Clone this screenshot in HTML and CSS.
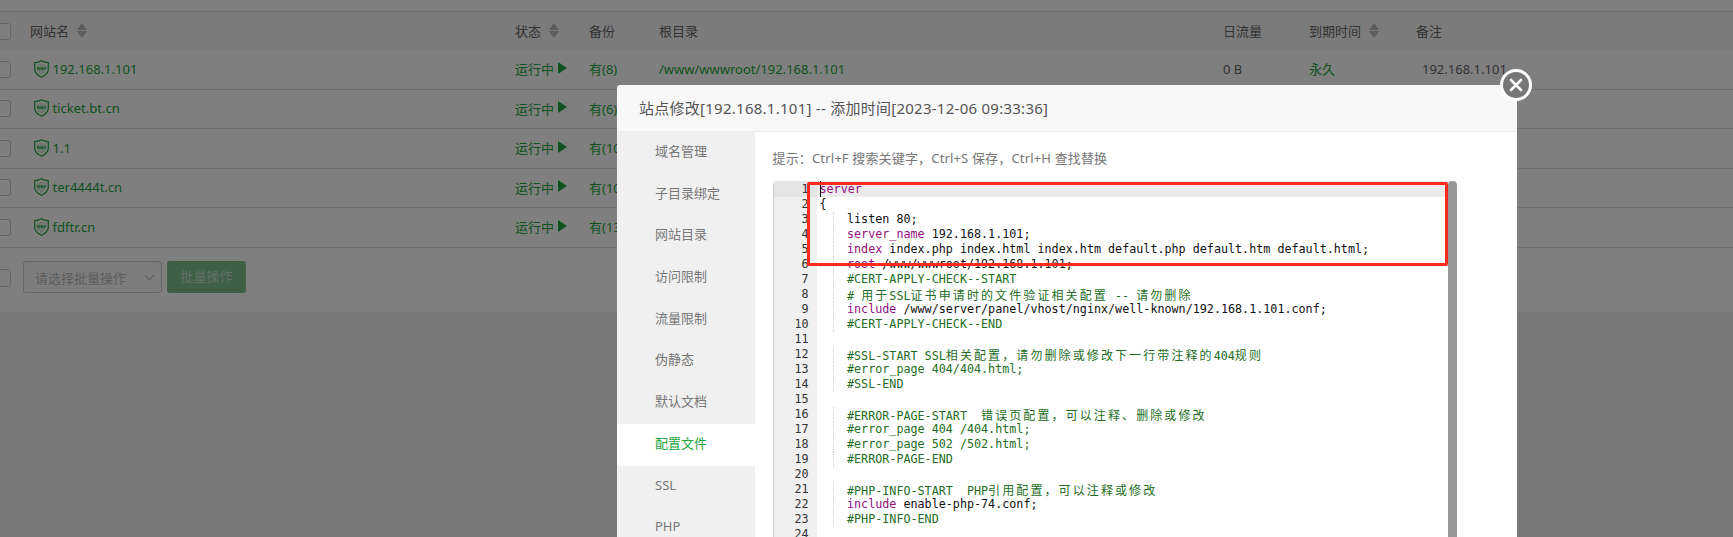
FILE: index.html
```html
<!DOCTYPE html>
<html lang="zh-CN">
<head>
<meta charset="utf-8">
<title>站点修改</title>
<link rel="stylesheet" href="styles.css">
</head>
<body>
<main class="page">
  <section class="panel">
    <div class="row head">
      <div class="cell-check"><span class="check"></span></div>
      <div class="cell">网站名<span class="sort"></span></div>
      <div class="cell">状态<span class="sort"></span></div>
      <div class="cell">备份</div>
      <div class="cell">根目录</div>
      <div class="cell">日流量</div>
      <div class="cell">到期时间<span class="sort"></span></div>
      <div class="cell">备注</div>
    </div>
    <div class="row">
      <div class="cell-check"><span class="check"></span></div>
      <div class="cell link"><svg class="shield" viewBox="0 0 15 18"><path class="sh-out" d="M7.5 .7 C9.6 2 11.9 2.6 14.3 2.7 V9.6 C14.3 13 11.2 15.5 7.5 17.2 C3.8 15.5 .7 13 .7 9.6 V2.7 C3.1 2.6 5.4 2 7.5 .7 Z"/><path class="sh-in" d="M7.5 3.4 C9 4.2 10.6 4.7 12.2 4.8 V9.4 C12.2 11.8 10.1 13.5 7.5 14.8 C4.9 13.5 2.8 11.8 2.8 9.4 V4.8 C4.4 4.7 6 4.2 7.5 3.4 Z"/><text x="7.5" y="10.4" text-anchor="middle" class="waf-text">WAF</text></svg>192.168.1.101</div>
      <div class="cell link">运行中<span class="play"></span></div>
      <div class="cell link">有(8)</div>
      <div class="cell link">/www/wwwroot/192.168.1.101</div>
      <div class="cell">0 B</div>
      <div class="cell link">永久</div>
      <div class="cell note">192.168.1.101</div>
    </div>
    <div class="row">
      <div class="cell-check"><span class="check"></span></div>
      <div class="cell link"><svg class="shield" viewBox="0 0 15 18"><path class="sh-out" d="M7.5 .7 C9.6 2 11.9 2.6 14.3 2.7 V9.6 C14.3 13 11.2 15.5 7.5 17.2 C3.8 15.5 .7 13 .7 9.6 V2.7 C3.1 2.6 5.4 2 7.5 .7 Z"/><path class="sh-in" d="M7.5 3.4 C9 4.2 10.6 4.7 12.2 4.8 V9.4 C12.2 11.8 10.1 13.5 7.5 14.8 C4.9 13.5 2.8 11.8 2.8 9.4 V4.8 C4.4 4.7 6 4.2 7.5 3.4 Z"/><text x="7.5" y="10.4" text-anchor="middle" class="waf-text">WAF</text></svg>ticket.bt.cn</div>
      <div class="cell link">运行中<span class="play"></span></div>
      <div class="cell link">有(6)</div>
      <div class="cell"></div><div class="cell"></div><div class="cell"></div><div class="cell"></div>
    </div>
    <div class="row">
      <div class="cell-check"><span class="check"></span></div>
      <div class="cell link"><svg class="shield" viewBox="0 0 15 18"><path class="sh-out" d="M7.5 .7 C9.6 2 11.9 2.6 14.3 2.7 V9.6 C14.3 13 11.2 15.5 7.5 17.2 C3.8 15.5 .7 13 .7 9.6 V2.7 C3.1 2.6 5.4 2 7.5 .7 Z"/><path class="sh-in" d="M7.5 3.4 C9 4.2 10.6 4.7 12.2 4.8 V9.4 C12.2 11.8 10.1 13.5 7.5 14.8 C4.9 13.5 2.8 11.8 2.8 9.4 V4.8 C4.4 4.7 6 4.2 7.5 3.4 Z"/><text x="7.5" y="10.4" text-anchor="middle" class="waf-text">WAF</text></svg>1.1</div>
      <div class="cell link">运行中<span class="play"></span></div>
      <div class="cell link">有(10)</div>
      <div class="cell"></div><div class="cell"></div><div class="cell"></div><div class="cell"></div>
    </div>
    <div class="row">
      <div class="cell-check"><span class="check"></span></div>
      <div class="cell link"><svg class="shield" viewBox="0 0 15 18"><path class="sh-out" d="M7.5 .7 C9.6 2 11.9 2.6 14.3 2.7 V9.6 C14.3 13 11.2 15.5 7.5 17.2 C3.8 15.5 .7 13 .7 9.6 V2.7 C3.1 2.6 5.4 2 7.5 .7 Z"/><path class="sh-in" d="M7.5 3.4 C9 4.2 10.6 4.7 12.2 4.8 V9.4 C12.2 11.8 10.1 13.5 7.5 14.8 C4.9 13.5 2.8 11.8 2.8 9.4 V4.8 C4.4 4.7 6 4.2 7.5 3.4 Z"/><text x="7.5" y="10.4" text-anchor="middle" class="waf-text">WAF</text></svg>ter4444t.cn</div>
      <div class="cell link">运行中<span class="play"></span></div>
      <div class="cell link">有(10)</div>
      <div class="cell"></div><div class="cell"></div><div class="cell"></div><div class="cell"></div>
    </div>
    <div class="row">
      <div class="cell-check"><span class="check"></span></div>
      <div class="cell link"><svg class="shield" viewBox="0 0 15 18"><path class="sh-out" d="M7.5 .7 C9.6 2 11.9 2.6 14.3 2.7 V9.6 C14.3 13 11.2 15.5 7.5 17.2 C3.8 15.5 .7 13 .7 9.6 V2.7 C3.1 2.6 5.4 2 7.5 .7 Z"/><path class="sh-in" d="M7.5 3.4 C9 4.2 10.6 4.7 12.2 4.8 V9.4 C12.2 11.8 10.1 13.5 7.5 14.8 C4.9 13.5 2.8 11.8 2.8 9.4 V4.8 C4.4 4.7 6 4.2 7.5 3.4 Z"/><text x="7.5" y="10.4" text-anchor="middle" class="waf-text">WAF</text></svg>fdftr.cn</div>
      <div class="cell link">运行中<span class="play"></span></div>
      <div class="cell link">有(13)</div>
      <div class="cell"></div><div class="cell"></div><div class="cell"></div><div class="cell"></div>
    </div>
    <div class="batch">
      <span class="check"></span>
      <div class="select">请选择批量操作<svg class="chev" viewBox="0 0 12 7"><path d="M1 1 L6 6 L11 1" fill="none" stroke="#999" stroke-width="1"/></svg></div>
      <div class="btn">批量操作</div>
    </div>
  </section>
</main>
<div class="shade"></div>
<div class="modal">
  <header class="modal-title">站点修改[192.168.1.101] -- 添加时间[2023-12-06 09:33:36]</header>
  <div class="modal-body">
    <nav class="side">
      <div class="side-item">域名管理</div>
      <div class="side-item">子目录绑定</div>
      <div class="side-item">网站目录</div>
      <div class="side-item">访问限制</div>
      <div class="side-item">流量限制</div>
      <div class="side-item">伪静态</div>
      <div class="side-item">默认文档</div>
      <div class="side-item active">配置文件</div>
      <div class="side-item">SSL</div>
      <div class="side-item">PHP</div>
    </nav>
    <div class="content">
      <p class="hint">提示：Ctrl+F 搜索关键字，Ctrl+S 保存，Ctrl+H 查找替换</p>
      <div class="editor">
        <div class="gutter">
          <div class="num on">1</div><div class="num">2</div><div class="num">3</div><div class="num">4</div><div class="num">5</div><div class="num">6</div><div class="num">7</div><div class="num">8</div><div class="num">9</div><div class="num">10</div><div class="num">11</div><div class="num">12</div><div class="num">13</div><div class="num">14</div><div class="num">15</div><div class="num">16</div><div class="num">17</div><div class="num">18</div><div class="num">19</div><div class="num">20</div><div class="num">21</div><div class="num">22</div><div class="num">23</div><div class="num">24</div>
        </div>
        <div class="code">
          <div class="line on"><span class="caret"></span><span class="kw">server</span></div>
          <div class="line">{</div>
          <div class="line in"><span>listen 80;</span></div>
          <div class="line in"><span><span class="kw">server_name</span> 192.168.1.101;</span></div>
          <div class="line in"><span><span class="kw">index</span> index.php index.html index.htm default.php default.htm default.html;</span></div>
          <div class="line in"><span><span class="kw">root</span> /www/wwwroot/192.168.1.101;</span></div>
          <div class="line in"><span class="cm">#CERT-APPLY-CHECK--START</span></div>
          <div class="line in"><span class="cm"># <span class="cjk">用于</span>SSL<span class="cjk">证书申请时的文件验证相关配置</span> -- <span class="cjk">请勿删除</span></span></div>
          <div class="line in"><span><span class="kw">include</span> /www/server/panel/vhost/nginx/well-known/192.168.1.101.conf;</span></div>
          <div class="line in"><span class="cm">#CERT-APPLY-CHECK--END</span></div>
          <div class="line"></div>
          <div class="line in"><span class="cm">#SSL-START SSL<span class="cjk">相关配置，请勿删除或修改下一行带注释的</span>404<span class="cjk">规则</span></span></div>
          <div class="line in"><span class="cm">#error_page 404/404.html;</span></div>
          <div class="line in"><span class="cm">#SSL-END</span></div>
          <div class="line"></div>
          <div class="line in"><span class="cm">#ERROR-PAGE-START&nbsp; <span class="cjk">错误页配置，可以注释、删除或修改</span></span></div>
          <div class="line in"><span class="cm">#error_page 404 /404.html;</span></div>
          <div class="line in"><span class="cm">#error_page 502 /502.html;</span></div>
          <div class="line in"><span class="cm">#ERROR-PAGE-END</span></div>
          <div class="line"></div>
          <div class="line in"><span class="cm">#PHP-INFO-START&nbsp; PHP<span class="cjk">引用配置，可以注释或修改</span></span></div>
          <div class="line in"><span><span class="kw">include</span> enable-php-74.conf;</span></div>
          <div class="line in"><span class="cm">#PHP-INFO-END</span></div>
          <div class="line"></div>
        </div>
        <div class="scrollbar"></div>
        <div class="redbox"></div>
      </div>
    </div>
  </div>
  <div class="close"><svg viewBox="0 0 26 26"><path d="M8 8 L18 18 M18 8 L8 18" stroke="#fff" stroke-width="2.6" stroke-linecap="round"/></svg></div>
</div>
</body>
</html>
```
FILE: styles.css
```css
* { box-sizing: border-box; }
html, body { margin: 0; height: 537px; overflow: hidden; }
body {
  font-family: "Noto Sans", "Noto Sans CJK SC", sans-serif;
  font-size: 13px;
  color: #666;
  background: #f0f0f0;
}
.waf-text { font: 700 4.4px "Liberation Sans", sans-serif; fill: #20a53a; }
.sh-out { fill: none; stroke: #20a53a; stroke-width: 1.2; }
.sh-in { fill: #20a53a; fill-opacity: .18; }
.page { height: 537px; }
.panel { background: #fff; height: 312px; padding-top: 11px; }
.row {
  display: grid;
  grid-template-columns: 30px 485px 74px 70px 564px 86px 107px 1fr;
  height: 39.5px;
  border-bottom: 1px solid #ddd;
  align-items: center;
}
.head { height: 39px; background: #f6f6f6; border-top: 1px solid #ddd; border-bottom: 0; }
.cell { display: flex; align-items: center; white-space: nowrap; padding-bottom: 1.5px; }
.link { color: #20a53a; }
.note { padding-left: 6px; }
.cell-check { display: flex; align-items: center; }
.check {
  display: block;
  width: 17px;
  height: 17px;
  margin-left: -6px;
  border: 1px solid #ccc;
  border-radius: 3px;
  background: #fff;
}
.shield { width: 15px; height: 18px; margin: 0 4px 0 3.5px; flex: none; }
.sort {
  position: relative;
  display: inline-block;
  width: 10px;
  height: 15px;
  margin-left: 8px;
}
.sort::before, .sort::after {
  content: "";
  position: absolute;
  left: 0;
  border-left: 5px solid transparent;
  border-right: 5px solid transparent;
}
.sort::before { top: 0; border-bottom: 7px solid #bbb; }
.sort::after { bottom: 0; border-top: 7px solid #bbb; }
.play {
  display: inline-block;
  margin: -2px 0 0 4px;
  border-left: 9px solid #20a53a;
  border-top: 6.5px solid transparent;
  border-bottom: 6.5px solid transparent;
}
.batch {
  display: flex;
  align-items: center;
  gap: 5px;
  padding-top: 13.5px;
}
.batch .check { margin-right: 7px; height: 18px; margin-top: 1px; }
.select {
  position: relative;
  width: 139px;
  height: 32px;
  line-height: 32px;
  padding-left: 11px;
  border: 1px solid #ccc;
  border-radius: 3px;
  color: #bbb;
  background: #fafafa;
}
.chev { position: absolute; left: 120px; top: 12px; width: 11px; height: 7px; }
.btn {
  width: 79px;
  height: 32px;
  line-height: 31px;
  text-align: center;
  background: #7fbf8d;
  border-radius: 3px;
  font-size: 13px;
  color: #c4dfca;
}
.shade { position: absolute; inset: 0; background: rgba(0, 0, 0, .5); }
.modal {
  position: absolute;
  left: 617px;
  top: 85px;
  width: 900px;
  height: 460px;
  background: #fff;
  border-radius: 4px 4px 0 0;
}
.modal-title {
  height: 47px;
  line-height: 46px;
  padding-left: 22px;
  font-size: 15px;
  letter-spacing: .26px;
  color: #555;
  background: #f8f8f8;
  border-bottom: 1px solid #eee;
  border-radius: 4px 0 0 0;
  white-space: nowrap;
}
.modal-body { display: flex; height: 413px; overflow: hidden; }
.side { width: 138px; flex: none; background: #f0f0f0; }
.side-item {
  height: 41.7px;
  line-height: 39px;
  padding-left: 38px;
  color: #777;
  font-size: 13px;
}
.side-item.active { color: #20a53a; background: #fff; }
.content { flex: 1; padding: 18px 0 0 17.5px; }
.hint { margin: 0 0 12.5px; line-height: 17px; padding-bottom: 1px; color: #777; font-size: 13px; letter-spacing: .16px; white-space: nowrap; }
.editor {
  position: relative;
  display: flex;
  width: 684px;
  height: 380px;
  border-left: 1px solid #ccc;
  border-radius: 4px 4px 0 0;
  font-family: "DejaVu Sans Mono", monospace;
  font-size: 11.72px;
  overflow: hidden;
}
.gutter { width: 43px; flex: none; background: #f0f0f0; color: #333; text-align: right; padding-top: 1px; }
.num { height: 15px; line-height: 15px; padding-right: 8px; }
.num.on { background: #e4e4e4; margin-top: -1px; padding-top: 1px; height: 16px; }
.code { flex: 1; min-width: 0; padding-top: 1px; }
.line {
  position: relative;
  height: 15px;
  line-height: 15px;
  padding-left: 3px;
  color: #111;
  white-space: pre;
}
.line.on { background: #ebebeb; margin-top: -1px; padding-top: 1px; height: 16px; }
.line.in { padding-left: 30.5px; }
.line.in::before {
  content: "";
  position: absolute;
  left: 16px;
  top: 0;
  bottom: 0;
  border-left: 1px dotted #ccc;
}
.kw { color: #930f80; }
.cm { color: #236e24; }
.cjk { font-family: "Noto Sans CJK SC", sans-serif; font-size: 12px; letter-spacing: 2.1px; }
.caret { position: absolute; left: 3px; top: 0; width: 1.5px; height: 16px; background: #000; }
.scrollbar {
  position: absolute;
  right: 0;
  top: 0;
  bottom: 0;
  width: 9px;
  background: #999;
  border-radius: 4px 4px 0 0;
}
.redbox {
  position: absolute;
  left: 33px;
  top: 1.5px;
  width: 641px;
  height: 84px;
  border: 3px solid #ff2a1c;
  border-radius: 2px;
}
.close {
  position: absolute;
  right: -15px;
  top: -16px;
  width: 32px;
  height: 32px;
  border: 3px solid #fff;
  border-radius: 50%;
  background: #777;
}
.close svg { display: block; width: 26px; height: 26px; }
```
